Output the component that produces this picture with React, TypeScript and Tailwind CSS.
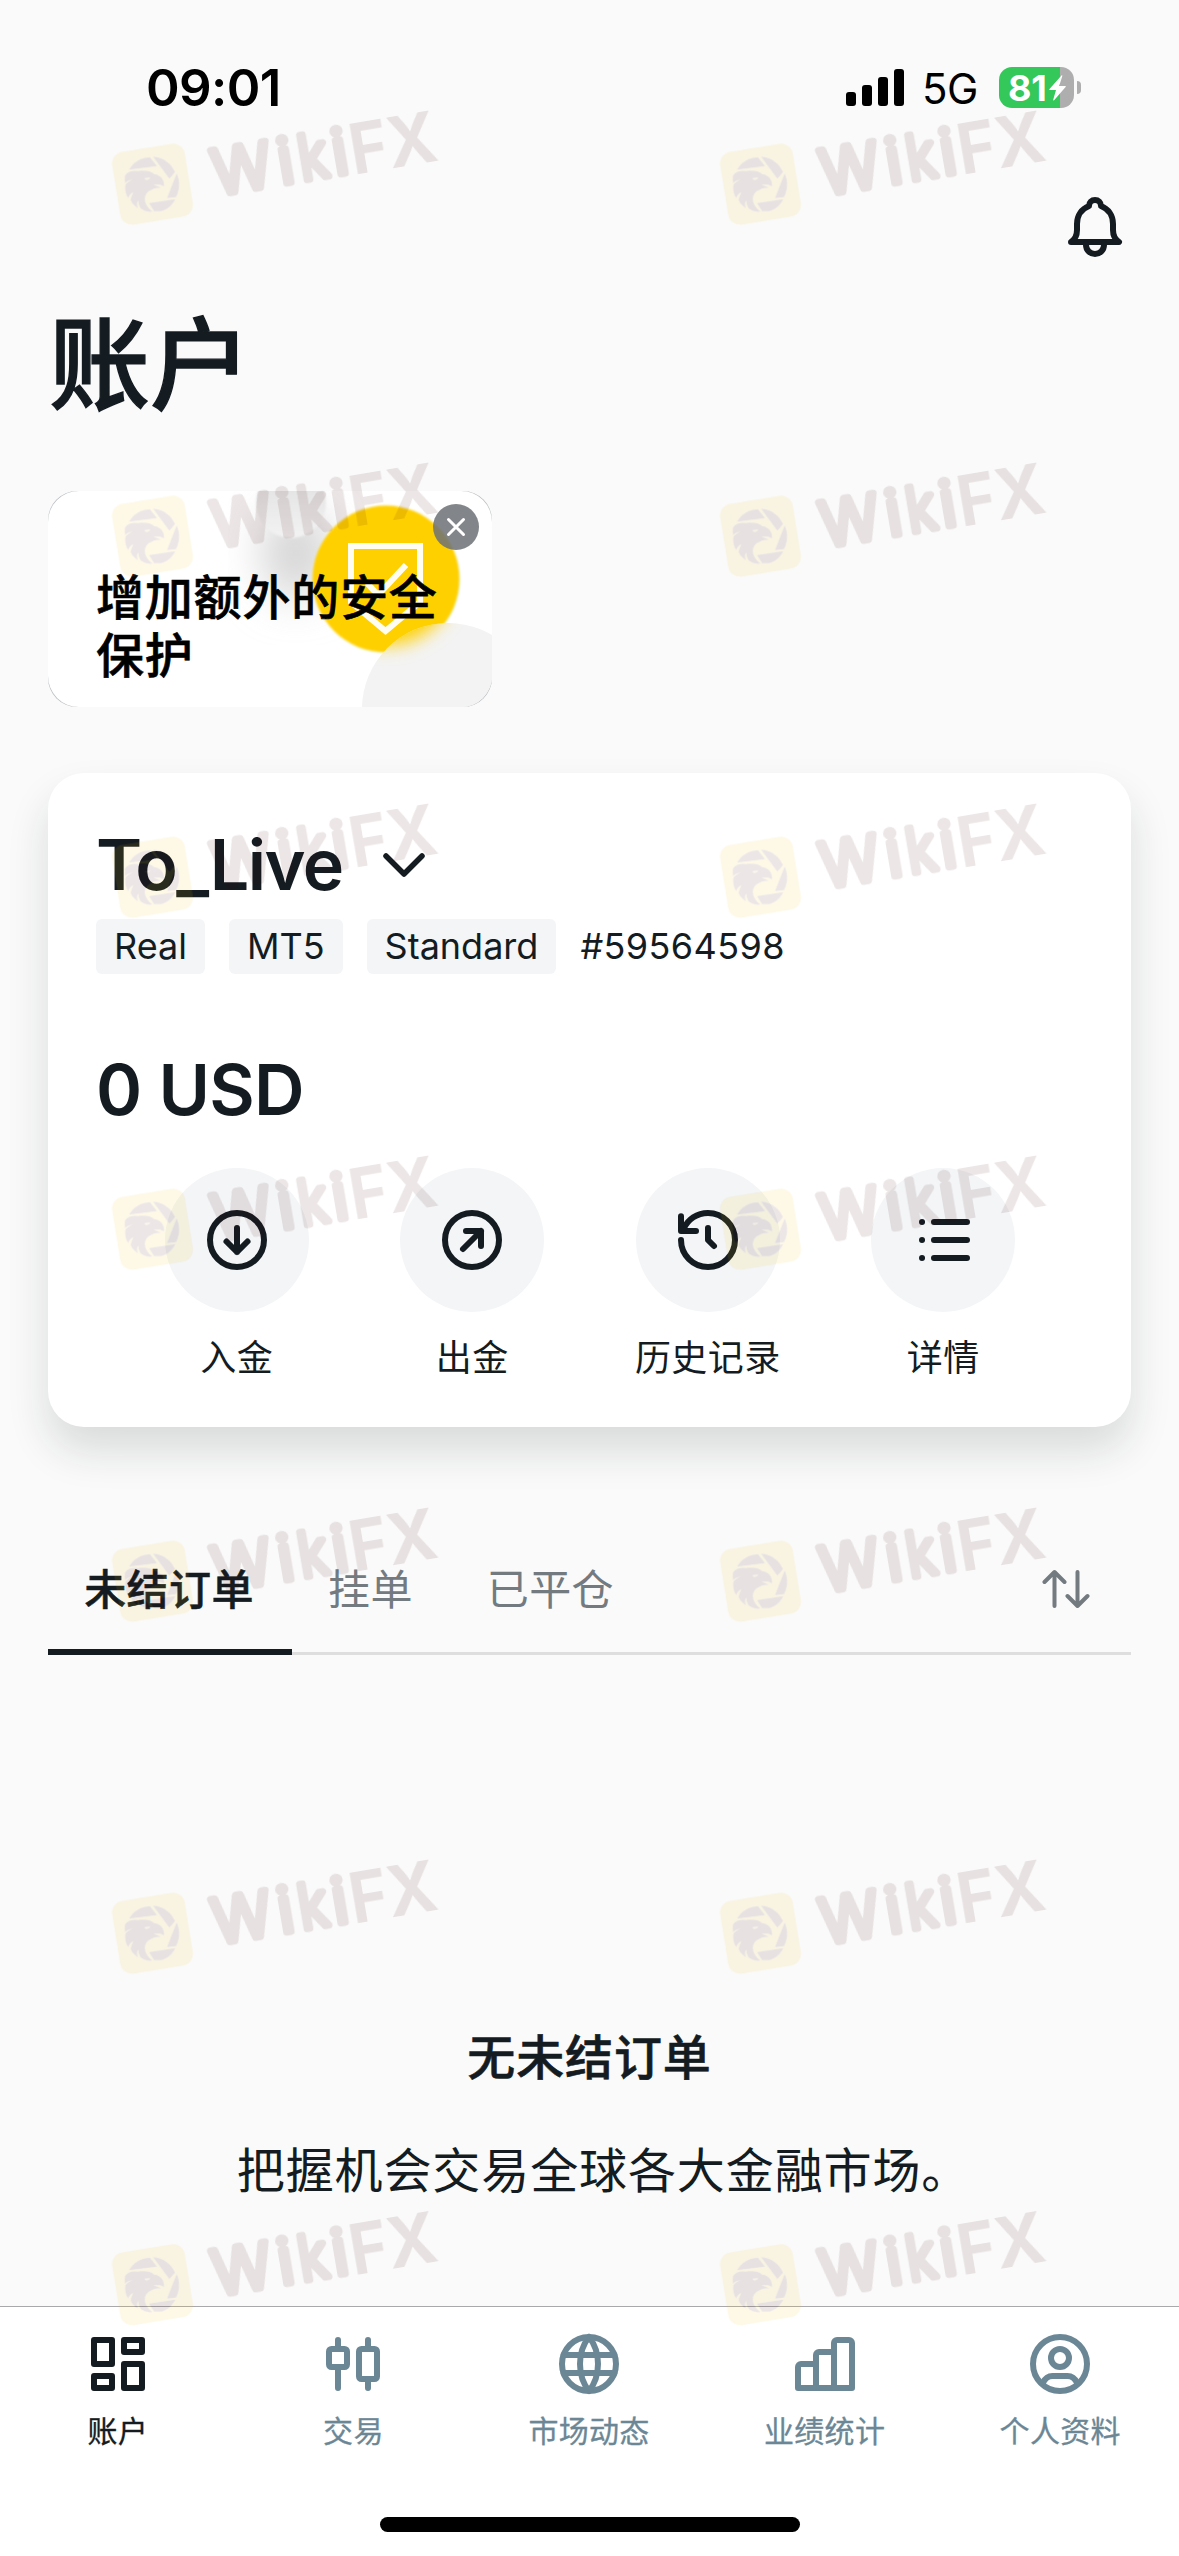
import type { ReactNode } from "react";

interface IconProps {
    children: ReactNode;
    className?: string;
};

const Icon = ({ children, className = "size-[72px]" }: IconProps) => {
    return (
        <svg
            viewBox="0 0 24 24"
            className={className}
            fill="none"
            stroke="currentColor"
            strokeWidth="2"
            strokeLinecap="round"
            strokeLinejoin="round"
        >
            {children}
        </svg>
    );
}

const actions = [
    {
        label: "入金",
        icon: <><circle cx="12" cy="12" r="9" /><path d="M12 8v8M8.5 12.5 12 16l3.5-3.5" /></>,
    },
    {
        label: "出金",
        icon: <><circle cx="12" cy="12" r="9" /><path d="M10 9h5v5M15 9l-6 6" /></>,
    },
    {
        label: "历史记录",
        icon: <><path d="M3 12a9 9 0 1 0 9-9C8.4 3 5.3 5 3.8 8.4" /><path d="M3 4.1V9h5M12 8v4l2 2" /></>,
    },
    {
        label: "详情",
        icon: (
            <>
                <path d="M9 6h11M9 12h11M9 18h11" />
                <path d="M5 6h.01M5 12h.01M5 18h.01" />
            </>
        ),
    },
];

const navItems = [
    {
        label: "账户",
        active: true,
        icon: (
            <>
                <rect x="4" y="4" width="6" height="8" />
                <rect x="14" y="4" width="6" height="4" />
                <rect x="14" y="12" width="6" height="8" />
                <rect x="4" y="16" width="6" height="4" />
            </>
        ),
    },
    {
        label: "交易",
        icon: (
            <>
                <rect x="4" y="7" width="6" height="6" rx="0.8" />
                <rect x="14" y="7" width="6" height="10" rx="0.8" />
                <path d="M7 4v3M7 13v7M17 4v3M17 17v3" />
            </>
        ),
    },
    {
        label: "市场动态",
        icon: (
            <>
                <circle cx="12" cy="12" r="9" />
                <path d="M12 3C8 8 8 16 12 21M12 3C16 8 16 16 12 21M3.5 9h17M3.5 15h17" />
            </>
        ),
    },
    {
        label: "业绩统计",
        icon: (
            <path d="M3 20V13a1 1 0 0 1 1-1h5V9a1 1 0 0 1 1-1h5V5a1 1 0 0 1 1-1h4a1 1 0 0 1 1 1V20ZM9 12v8M15 8v12" />
        ),
    },
    {
        label: "个人资料",
        icon: (
            <>
                <circle cx="12" cy="12" r="9" />
                <circle cx="12" cy="10" r="3" />
                <path d="M6.3 18.3C7 16.8 8 16 9.5 16h5C16 16 17 16.8 17.7 18.3" />
            </>
        ),
    },
];

const tags = ["Real", "MT5", "Standard"];

const StatusBar = () => {
    return (
        <div className="flex h-[175px] items-center justify-between pr-[98px] pl-[146px] text-black">
            <span className="text-[51px] leading-none font-semibold tracking-[-0.6px]">09:01</span>
            <div className="flex items-center">
                <div className="flex h-[37px] items-end gap-[6px]">
                    <i className="h-[14px] w-[10px] rounded-[3px] bg-black" />
                    <i className="h-[21px] w-[10px] rounded-[3px] bg-black" />
                    <i className="h-[29px] w-[10px] rounded-[3px] bg-black" />
                    <i className="h-[37px] w-[10px] rounded-[3px] bg-black" />
                </div>
                <span className="ml-[18px] w-[77px] pt-[2px] text-[42px] leading-none tracking-[-0.5px]">5G</span>
                <div className="flex h-[41px] w-[75px] items-center rounded-[13px] bg-[linear-gradient(to_right,#34c759_61px,#aeaeae_61px)] pl-[9px] text-white">
                    <span className="w-[41px] text-[36px] leading-none font-bold tracking-[-0.2px]">81</span>
                    <svg viewBox="0 0 17 26" className="h-[26px] w-[17px]" fill="currentColor">
                        <path d="M12.5 0.5 0.5 14c-.4.6-.2 1 .4 1H7L4.2 24.8c-.2.8.4 1 .9.5L16.6 12c.4-.6.2-1-.4-1H10.2L13.3 1C13.5.3 13 0 12.5.5Z" />
                    </svg>
                </div>
                <i className="ml-[3px] h-[13px] w-[4px] rounded-r-full bg-[#aeaeae]" />
            </div>
        </div>
    );
}

const Promo = () => {
    return (
        <div className="mt-[79px] ml-[48px] h-[216px] w-[444px] rounded-[29px] bg-[#b9bec1]">
            <div className="relative h-full overflow-hidden rounded-[31px] bg-white">
                <svg viewBox="0 0 444 216" className="absolute inset-0">
                    <defs>
                        <filter id="soft" x="-50%" y="-50%" width="200%" height="200%">
                            <feGaussianBlur stdDeviation="22" />
                        </filter>
                        <filter id="edge" x="-20%" y="-20%" width="140%" height="140%">
                            <feGaussianBlur stdDeviation="1" />
                        </filter>
                        <filter id="frost" x="-20%" y="-20%" width="140%" height="140%">
                            <feGaussianBlur stdDeviation="9" />
                        </filter>
                        <clipPath id="glass">
                            <circle cx="400" cy="218" r="86" />
                        </clipPath>
                        <linearGradient id="ball" x1="0" y1="0" x2="0" y2="1">
                            <stop offset="0" stopColor="#dedede" />
                            <stop offset="1" stopColor="#f3f3f3" />
                        </linearGradient>
                    </defs>
                    <ellipse cx="248" cy="62" rx="34" ry="46" fill="#d4d4d4" filter="url(#soft)" />
                    <circle cx="243" cy="12" r="35" fill="url(#ball)" filter="url(#edge)" />
                    <circle cx="338" cy="88" r="73.5" fill="#ffd002" filter="url(#edge)" />
                    <path
                        d="M303 55h69v56l-34.5 29L303 111Z"
                        fill="none"
                        stroke="#fffdf2"
                        strokeWidth="6"
                    />
                    <path d="m319 92 11 12 28-30" fill="none" stroke="#fffdf2" strokeWidth="6" />
                    <g clipPath="url(#glass)">
                        <rect x="300" y="120" width="150" height="100" fill="#f3f3f3" />
                        <circle cx="338" cy="84" r="70" fill="#ffd002" filter="url(#frost)" />
                    </g>
                </svg>
                <p className="relative pt-[78px] pl-[48px] text-[48px] leading-[58px] font-medium tracking-[0.8px] text-black [-webkit-text-stroke:0.6px]">
                    增加额外的安全
                    <br />
                    保护
                </p>
                <span className="absolute top-[13px] right-[13px] flex size-[46px] items-center justify-center rounded-full bg-[#6c7175]/85 text-white">
                    <svg viewBox="0 0 20 20" className="size-[20px]" stroke="currentColor" strokeWidth="3" strokeLinecap="round">
                        <path d="m2.5 2.5 15 15M17.5 2.5l-15 15" />
                    </svg>
                </span>
            </div>
        </div>
    );
}

const AccountCard = () => {
    return (
        <div className="mx-[48px] mt-[66px] h-[654px] rounded-[36px] bg-white pt-[50px] shadow-[0_24px_42px_rgba(20,34,34,0.14)]">
            <div className="flex h-[84px] items-center pl-[48px]">
                <span className="text-[70px] leading-none font-semibold tracking-[-1.6px]">To_Live</span>
                <svg
                    viewBox="0 0 42 24"
                    className="ml-[41px] h-[24px] w-[42px]"
                    fill="none"
                    stroke="currentColor"
                    strokeWidth="5.5"
                    strokeLinecap="round"
                    strokeLinejoin="round"
                >
                    <path d="m3 3 18 18L39 3" />
                </svg>
            </div>
            <div className="mt-[12px] flex h-[55px] items-center gap-[24px] pl-[48px] text-[36px] leading-[54px]">
                {tags.map((tag) => (
                    <span key={tag} className="h-full rounded-[6px] bg-[#f3f5f7] px-[18px]">{tag}</span>
                ))}
                <span className="h-full tracking-[0.4px]">#59564598</span>
            </div>
            <div className="mt-[73px] flex h-[84px] items-center pl-[48px] text-[70px] font-semibold tracking-[-0.7px]">
                0 USD
            </div>
            <div className="mr-[70px] ml-[71px] mt-[37px] grid grid-cols-4">
                {actions.map((action) => (
                    <div key={action.label} className="flex flex-col items-center">
                        <div className="flex size-[144px] items-center justify-center rounded-full bg-[#f3f5f7]">
                            <Icon>{action.icon}</Icon>
                        </div>
                        <span className="mt-[21px] text-[36px] leading-[50px] tracking-[0.4px]">{action.label}</span>
                    </div>
                ))}
            </div>
        </div>
    );
}

const OrderTabs = () => {
    return (
        <div className="mx-[48px] mt-[108px] flex h-[120px] items-stretch border-b-[3px] border-[#dedede] text-[42px] tracking-[0.4px] text-[#737b80]">
            <span className="-mb-[3px] flex w-[244px] items-center justify-center border-b-[6px] border-[#141c22] pr-[2px] pb-[6px] font-medium text-[#141c22] [-webkit-text-stroke:0.5px]">
                未结订单
            </span>
            <span className="flex items-center px-[36px] pb-[9px]">挂单</span>
            <span className="flex items-center px-[38px] pb-[9px]">已平仓</span>
            <svg
                viewBox="0 0 48 40"
                className="mt-[34px] mr-[41px] ml-auto h-[40px] w-[48px]"
                fill="none"
                stroke="currentColor"
                strokeWidth="4"
                strokeLinecap="round"
                strokeLinejoin="round"
            >
                <path d="M12.5 37V3M2.5 13l10-10 10 10M35.5 3v34M25.5 27l10 10 10-10" />
            </svg>
        </div>
    );
}

const BottomNav = () => {
    return (
        <nav className="flex h-[250px] flex-col items-center border-t border-[#a9a9ab] bg-white">
            <div className="grid w-full grid-cols-5 pt-[21px] pr-px">
                {navItems.map((item) => (
                    <div
                        key={item.label}
                        className={item.active
                            ? "flex flex-col items-center text-[#141c22]"
                            : "flex flex-col items-center text-[#6b8796]"}
                    >
                        <Icon>{item.icon}</Icon>
                        <span className="mt-[11px] text-[30px] leading-[40px] tracking-[0.3px] [-webkit-text-stroke:0.3px]">{item.label}</span>
                    </div>
                ))}
            </div>
            <i className="mt-auto mb-[24px] h-[15px] w-[420px] rounded-full bg-black" />
        </nav>
    );
}

const watermarkRows = [0, 352, 693, 1045, 1397, 1749, 2100.5];

// letters are placed one by one along the slanted baseline
const wikiLetters = [
    { char: "W", x: 11, width: 177 },
    { char: "i", x: 210, width: 45 },
    { char: "k", x: 273, width: 86 },
    { char: "i", x: 375, width: 45 },
];

const Watermarks = () => {
    return (
        <svg viewBox="0 0 1179 2556" className="pointer-events-none absolute inset-0 h-[2556px] w-[1179px]">
            <defs>
                <mask id="badge">
                    <rect width="300" height="600" fill="#fff" />
                    <use href="#eagle" fill="#000" />
                </mask>
                <g id="eagle">
                    <path d="M87 389C100 366 124 351 150 352L171 378Z" />
                    <path d="M159 350C190 352 212 370 225 396L208 416Z" />
                    <path d="M230 400C240 424 240 448 228 471L201 474Z" />
                    <path d="M147 489 226 477C216 496 202 508 184 513H162Z" />
                    <path d="M75 406C84 393 98 391 112 393C128 392 150 389 162 402C182 403 194 420 192 440C184 432 170 434 160 434C166 438 178 438 183 444C168 441 156 448 147 453C130 464 128 492 158 515C146 516 136 514 128 509C118 504 116 492 114 480C110 490 111 498 114 504C104 499 96 490 92 480C92 470 98 462 100 456C92 460 86 468 84 474C76 462 74 446 76 434C82 426 92 422 98 419C88 420 80 424 75 430C74 422 74 414 75 406ZM133 414C137 422 146 421 151 413Z" fillRule="evenodd" />
                </g>
                <g id="watermark" transform="translate(100 40) scale(0.33333)">
                    <g opacity="0.1">
                        <g mask="url(#badge)">
                            <rect x="47" y="322" width="221" height="221" rx="36" fill="#f2be00" transform="rotate(-9.2 157.5 432.5)" />
                        </g>
                        <use href="#eagle" fill="#410500" />
                        <g transform="translate(340 480) rotate(-9.6)" fill="#410500">
                            {wikiLetters.map((letter) => (
                                <text
                                    key={letter.x}
                                    x={letter.x}
                                    y="-12"
                                    fontSize="186"
                                    fontWeight="300"
                                    textLength={letter.width}
                                    lengthAdjust="spacingAndGlyphs"
                                    stroke="#410500"
                                    strokeWidth="21"
                                    strokeLinejoin="round"
                                >
                                    {letter.char}
                                </text>
                            ))}
                            <text x="428" y="-4" fontSize="212" fontWeight="700" textLength="115" lengthAdjust="spacingAndGlyphs">
                                F
                            </text>
                            <text x="542" y="-4" fontSize="212" fontWeight="700" textLength="149" lengthAdjust="spacingAndGlyphs">
                                X
                            </text>
                        </g>
                    </g>
                </g>
            </defs>
            {watermarkRows.map((y) => (
                <g key={y}>
                    <use href="#watermark" y={y} />
                    <use href="#watermark" x="608" y={y} />
                </g>
            ))}
        </svg>
    );
}

export default function App() {
    return (
        <div className="relative flex h-[2556px] w-[1179px] flex-col overflow-hidden bg-[#fafafa] font-['Inter','Noto_Sans_CJK_SC',sans-serif] text-[#141c22]">
            <StatusBar />
            <div className="mt-[16px] flex justify-end pr-[48px]">
                <Icon>
                    <path d="M4 17C5.2 16.2 6 15 6 13V11C6 8 7.7 5.9 10 5C10 3.8 10.9 3 12 3S14 3.8 14 5C16.3 5.9 18 8 18 11V13C18 15 18.8 16.2 20 17H4Z" />
                    <path d="M9 17.5V18A3 3 0 0 0 15 18V17.5" />
                </Icon>
            </div>
            <h1 className="mt-[56px] pl-[49px] text-[101px] leading-[93px] font-medium [-webkit-text-stroke:1.4px]">账户</h1>
            <Promo />
            <AccountCard />
            <OrderTabs />
            <div className="flex flex-1 flex-col items-center pt-[368px] text-center text-[48px] leading-[70px] tracking-[0.9px]">
                <h2 className="font-medium [-webkit-text-stroke:0.6px]">无未结订单</h2>
                <p className="mt-[43px] pl-[28px]">把握机会交易全球各大金融市场。</p>
            </div>
            <BottomNav />
            <Watermarks />
        </div>
    );
}
